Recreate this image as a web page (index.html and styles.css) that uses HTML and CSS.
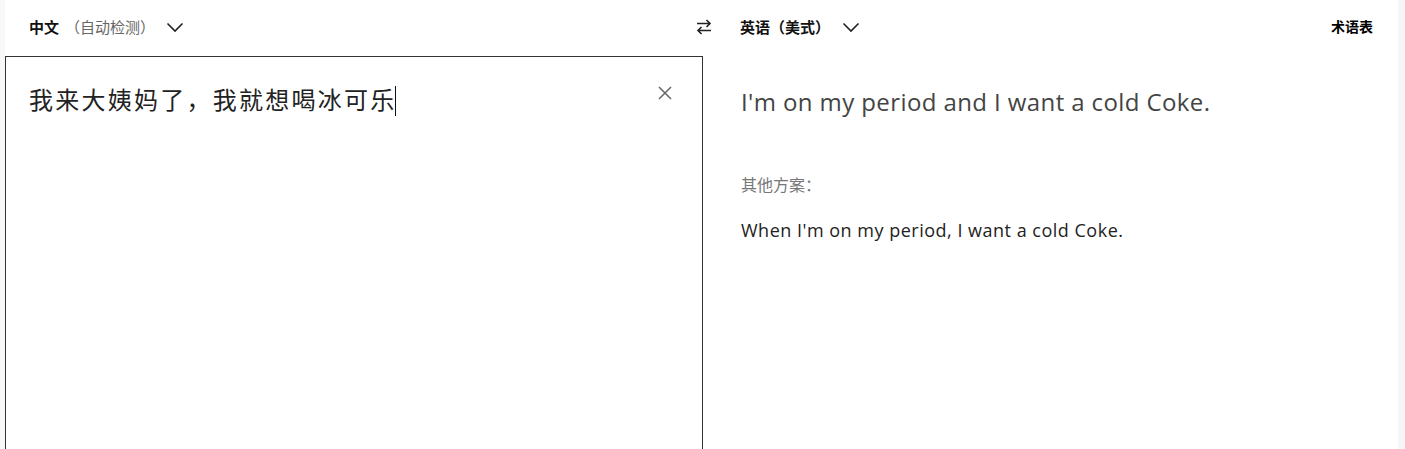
FILE: index.html
```html
<!DOCTYPE html>
<html lang="zh-CN">
<head>
<meta charset="utf-8">
<link rel="stylesheet" href="styles.css">
</head>
<body>
<div class="page">
  <div class="main">
    <div class="source">
      <div class="bar">
        <span class="lang">中文</span><span class="detect">（自动检测）</span>
        <svg class="chev" width="18" height="12" viewBox="0 0 18 12"><path d="M1.5 2.5 L9 10 L16.5 2.5" fill="none" stroke="#222" stroke-width="1.6"/></svg>
        <svg class="swap" width="18" height="20" viewBox="0 0 18 20"><path d="M2 6.5 H15 M11.5 3 L15 6.5 L11.5 10" fill="none" stroke="#222" stroke-width="1.6"/><path d="M16 13.5 H3 M6.5 10 L3 13.5 L6.5 17" fill="none" stroke="#222" stroke-width="1.6"/></svg>
      </div>
      <div class="input">
        <div class="text">我来大姨妈了，我就想喝冰可乐<span class="caret"></span></div>
        <svg class="clear" width="14" height="14" viewBox="0 0 14 14"><path d="M1 1 L13 13 M13 1 L1 13" stroke="#666" stroke-width="1.5"/></svg>
      </div>
    </div>
    <div class="target">
      <div class="bar">
        <span class="lang2">英语（美式）</span>
        <svg class="chev" width="18" height="12" viewBox="0 0 18 12"><path d="M1.5 2.5 L9 10 L16.5 2.5" fill="none" stroke="#222" stroke-width="1.6"/></svg>
        <span class="glossary">术语表</span>
      </div>
      <div class="output">
        <div class="result">I'm on my period and I want a cold Coke.</div>
        <div class="alt-label">其他方案：</div>
        <div class="alt">When I'm on my period, I want a cold Coke.</div>
      </div>
    </div>
  </div>
  <div class="edge"></div>
</div>
</body>
</html>
```

FILE: styles.css
```css
* { box-sizing: border-box; }
html, body { margin: 0; padding: 0; }
body {
  width: 1405px;
  height: 449px;
  overflow: hidden;
  background: #f8f8fa;
  font-family: "Open Sans", "Noto Sans CJK SC", sans-serif;
}
.page {
  display: flex;
  height: 449px;
  padding-left: 5px;
}
.main {
  flex: 1;
  display: flex;
  background: #fff;
}
.edge {
  width: 7px;
  background: #f6f6f8;
}
.source {
  width: 698px;
  display: flex;
  flex-direction: column;
}
.bar {
  height: 56px;
  display: flex;
  align-items: center;
  padding-left: 24px;
  padding-bottom: 4px;
  font-family: "Noto Sans CJK SC", sans-serif;
}
.lang {
  font-size: 15px;
  font-weight: 700;
  color: #111;
}
.detect {
  font-size: 15px;
  color: #666;
  margin-left: 6px;
}
.chev { margin-left: 11px; margin-top: 1px; }
.swap { margin-left: auto; margin-right: -10px; margin-top: 2px; }
.input {
  flex: 1;
  position: relative;
  border: 1px solid #333;
  border-bottom: none;
  padding: 22px 0 0 23px;
}
.text {
  font-family: "Noto Sans CJK SC", sans-serif;
  font-size: 24px;
  letter-spacing: 2.25px;
  color: #222;
  line-height: 40px;
}
.caret {
  display: inline-block;
  width: 1px;
  height: 30px;
  background: #111;
  vertical-align: -7px;
  margin-left: -2px;
}
.clear {
  position: absolute;
  top: 29px;
  right: 30px;
}
.target {
  flex: 1;
  display: flex;
  flex-direction: column;
}
.target .bar { padding-left: 37px; padding-right: 24px; }
.lang2 {
  font-size: 15px;
  font-weight: 700;
  color: #111;
}
.target .chev { margin-left: 12px; }
.glossary {
  margin-left: auto;
  font-size: 14px;
  font-weight: 700;
  color: #000;
  margin-right: 1px;
}
.output {
  padding: 28px 0 0 38px;
}
.result {
  font-size: 24px;
  letter-spacing: 0.4px;
  color: #444;
  line-height: 36px;
}
.alt-label {
  margin-top: 52px;
  font-family: "Noto Sans CJK SC", sans-serif;
  font-size: 16px;
  color: #777;
  line-height: 24px;
}
.alt {
  margin-top: 21px;
  font-size: 18px;
  letter-spacing: 0.5px;
  color: #222;
  line-height: 26px;
}
```
